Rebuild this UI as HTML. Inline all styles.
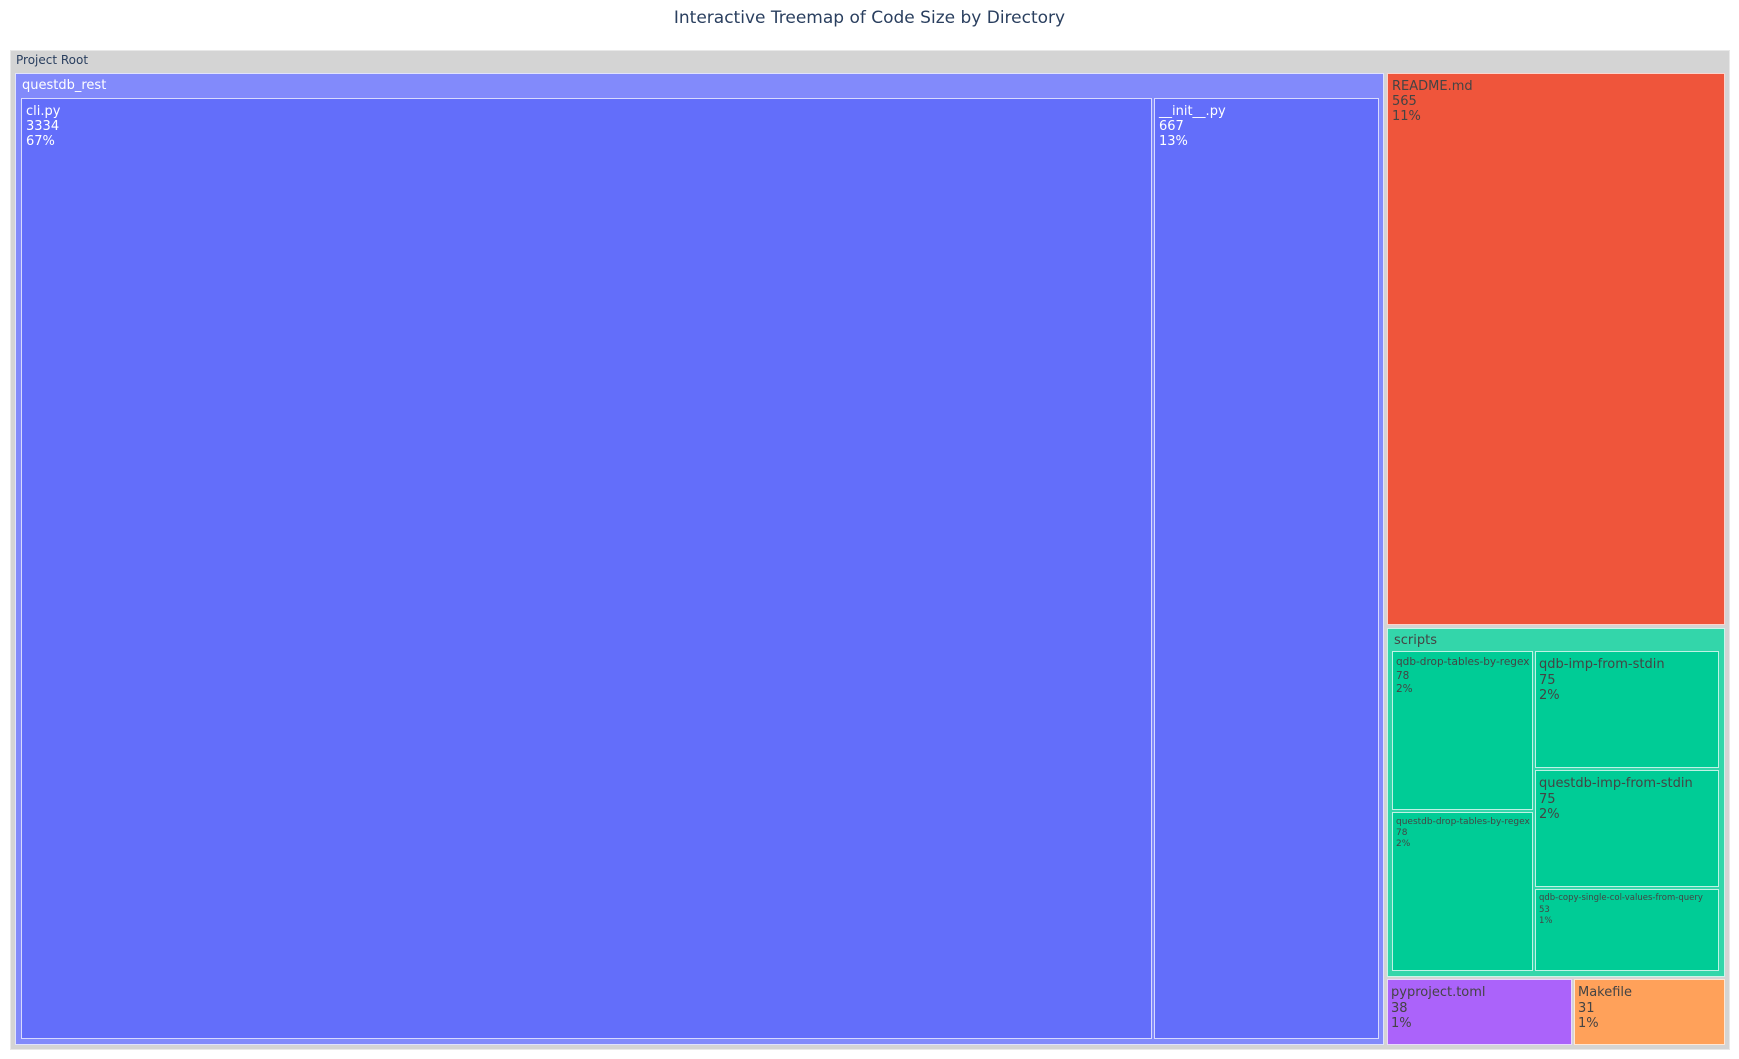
<!DOCTYPE html>
<html><head><meta charset="utf-8"><style>
body{margin:0;width:1739px;height:1059px;background:#fff;position:relative;overflow:hidden;font-family:"DejaVu Sans","Liberation Sans",sans-serif;}
.b{position:absolute;box-sizing:border-box;border:1px solid rgba(255,255,255,0.75);color:#444;font-size:13px;line-height:15px;padding:5px 0 0 4px;white-space:nowrap;overflow:hidden}
.w{color:#fff}
.t{position:absolute;top:8px;left:0;width:1739px;text-align:center;font-size:17px;color:#2a3f5f}
</style></head><body>
<div class="t">Interactive Treemap of Code Size by Directory</div>
<div class="b" style="left:10px;top:50px;width:1720px;height:1000px;background:#d4d4d4;color:#2a3f5f;border-color:#e8e8e8;padding:2px 0 0 5px;font-size:12px">Project Root</div>
<div class="b w" style="left:15px;top:73px;width:1369px;height:972px;background:#828afb;padding:4px 0 0 6px">questdb_rest</div>
<div class="b w" style="left:21px;top:98px;width:1131px;height:941px;background:#636efa">cli.py<br>3334<br>67%</div>
<div class="b w" style="left:1154px;top:98px;width:225px;height:941px;background:#636efa">__init__.py<br>667<br>13%</div>
<div class="b" style="left:1387px;top:73px;width:338px;height:552px;background:#ef553b">README.md<br>565<br>11%</div>
<div class="b" style="left:1387px;top:628px;width:338px;height:349px;background:#33d6aa;padding:4px 0 0 6px;font-size:13px">scripts</div>
<div class="b" style="left:1392px;top:651px;width:141px;height:159px;background:#00cc96;font-size:10.5px;line-height:13.5px;padding:4px 0 0 3px">qdb-drop-tables-by-regex<br>78<br>2%</div>
<div class="b" style="left:1392px;top:812px;width:141px;height:159px;background:#00cc96;font-size:9px;line-height:11px;padding:4px 0 0 3px">questdb-drop-tables-by-regex<br>78<br>2%</div>
<div class="b" style="left:1535px;top:651px;width:184px;height:117px;background:#00cc96;font-size:13px;line-height:15.5px;padding:5px 0 0 3px">qdb-imp-from-stdin<br>75<br>2%</div>
<div class="b" style="left:1535px;top:770px;width:184px;height:117px;background:#00cc96;font-size:13px;line-height:15.5px;padding:5px 0 0 3px">questdb-imp-from-stdin<br>75<br>2%</div>
<div class="b" style="left:1535px;top:889px;width:184px;height:82px;background:#00cc96;font-size:8.5px;line-height:11.5px;padding:3px 0 0 3px">qdb-copy-single-col-values-from-query<br>53<br>1%</div>
<div class="b" style="left:1387px;top:979px;width:185px;height:66px;background:#ab63fa;font-size:13px;line-height:15.5px;padding:5px 0 0 3px">pyproject.toml<br>38<br>1%</div>
<div class="b" style="left:1574px;top:979px;width:151px;height:66px;background:#ffa15a;font-size:13px;line-height:15.5px;padding:5px 0 0 3px">Makefile<br>31<br>1%</div>
</body></html>
